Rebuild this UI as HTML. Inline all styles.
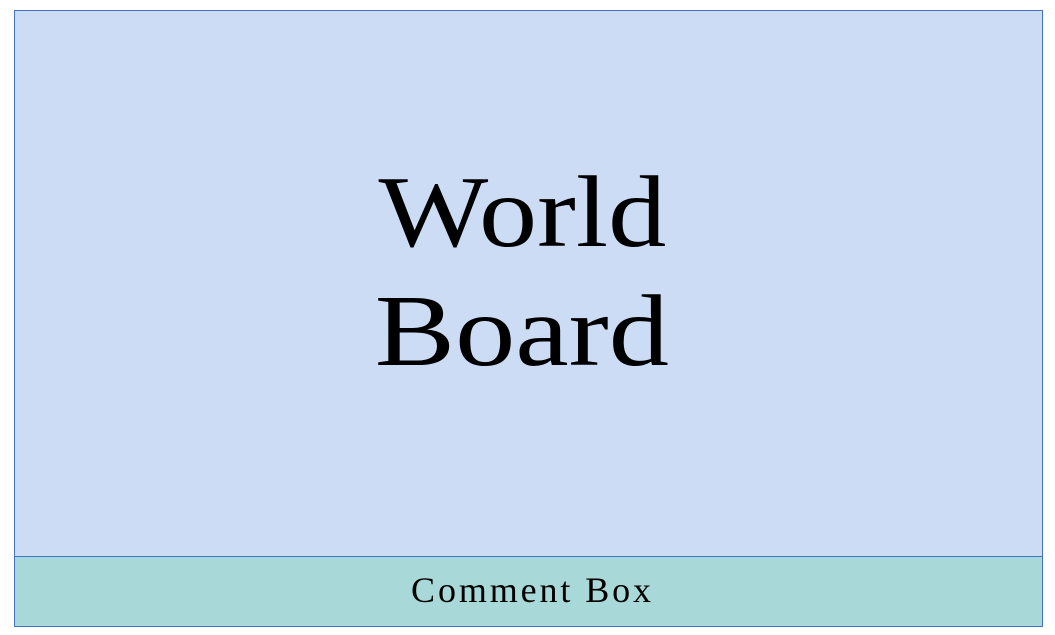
<!DOCTYPE html>
<html><head><meta charset="utf-8"><style>
html,body{margin:0;padding:0;background:#fff;width:1055px;height:635px;overflow:hidden;position:relative}
.box{position:absolute;left:14px;top:10px;width:1027px;height:546px;background:#cddcf5;border:1px solid #4472c4;border-bottom:none}
.cb{position:absolute;left:14px;top:556px;width:1027px;height:69px;background:#a8d8d8;border:1px solid #4472c4}
.t{position:absolute;left:0;width:1045px;text-align:center;font-family:"Liberation Serif",serif;color:#000}
.big{font-size:102px;line-height:119px}
</style></head><body>
<div class="box"></div>
<div class="cb"></div>
<div class="t big" style="top:153px;transform:scaleX(1.14);transform-origin:523px 0">World</div>
<div class="t big" style="top:272px;transform:scaleX(1.18);transform-origin:526px 0">Board</div>
<div class="t" style="top:572px;left:10px;font-size:36px;line-height:37px;letter-spacing:2.9px">Comment Box</div>
</body></html>
